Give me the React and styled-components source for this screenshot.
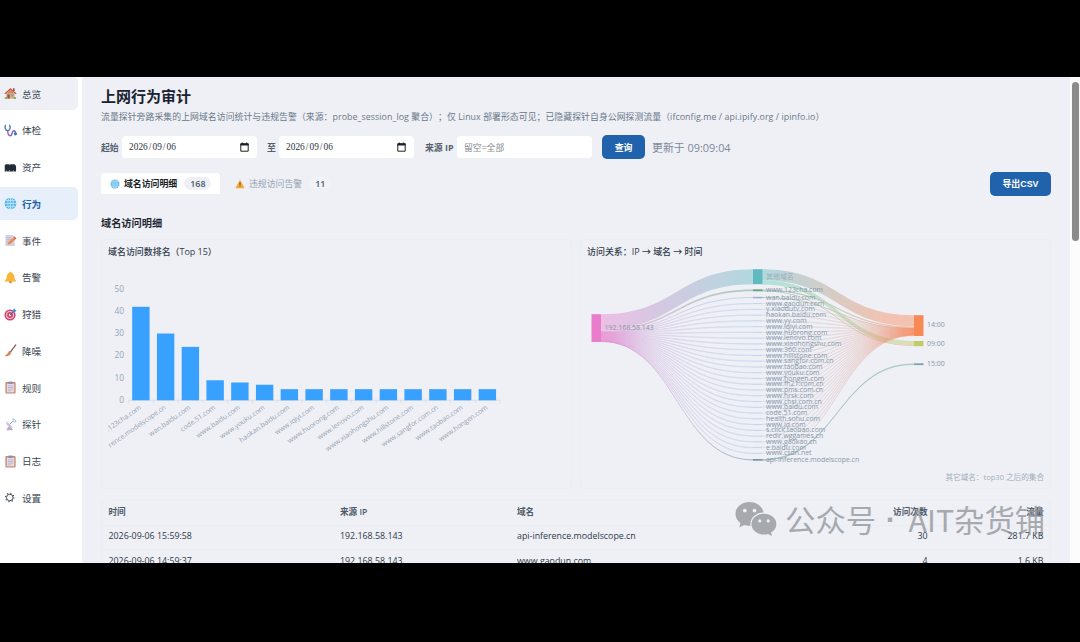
import React from "react";
import styled, { createGlobalStyle, css } from "styled-components";

const font = `"Open Sans", "Noto Sans CJK SC", sans-serif`;

const menu = [
  { name: "总览", icon: "home", hover: true },
  { name: "体检", icon: "stetho" },
  { name: "资产", icon: "asset" },
  { name: "行为", icon: "globe", active: true },
  { name: "事件", icon: "memo" },
  { name: "告警", icon: "bell" },
  { name: "狩猎", icon: "target" },
  { name: "降噪", icon: "broom" },
  { name: "规则", icon: "clip" },
  { name: "探针", icon: "dish" },
  { name: "日志", icon: "clip" },
  { name: "设置", icon: "gear" },
];

const ranking = [
  [".123cha.com", 42],
  ["rence.modelscope.cn", 30],
  ["wan.baidu.com", 24],
  ["code.51.com", 9],
  ["www.baidu.com", 8],
  ["www.youku.com", 7],
  ["haokan.baidu.com", 5],
  ["www.iqiyi.com", 5],
  ["www.huorong.com", 5],
  ["www.lenovo.com", 5],
  ["www.xiaohongshu.com", 5],
  ["www.hillstone.com", 5],
  ["www.sangfor.com.cn", 5],
  ["www.taobao.com", 5],
  ["www.hongen.com", 5],
];

const domains = [
  "www.gaodun.com",
  "y.xiaodutv.com",
  "haokan.baidu.com",
  "www.yy.com",
  "www.iqiyi.com",
  "www.huorong.com",
  "www.lenovo.com",
  "www.xiaohongshu.com",
  "www.360.com",
  "www.hillstone.com",
  "www.sangfor.com.cn",
  "www.taobao.com",
  "www.youku.com",
  "www.hongen.com",
  "www.fh21.com.cn",
  "www.pms.com.cn",
  "www.hrsk.com",
  "www.chsi.com.cn",
  "www.baidu.com",
  "code.51.com",
  "health.sohu.com",
  "www.jd.com",
  "s.click.taobao.com",
  "redir.wggames.cn",
  "www.gaokao.cn",
  "e.baidu.com",
  "www.csdn.net",
];

const rows = [
  ["2026-09-06 15:59:58", "192.168.58.143", "api-inference.modelscope.cn", "30", "281.7 KB"],
  ["2026-09-06 14:59:37", "192.168.58.143", "www.gaodun.com", "4", "1.6 KB"],
];

const icons = {
  home: (
    <>
      <path d="M2.5 6.5h9v6h-9z" fill="#d9a982" />
      <path d="M.4 7 7 1l6.6 6-1 .9L7 3.2 1.4 7.9z" fill="#c8553f" />
      <path d="M3 6.6 7 3l4 3.6z" fill="#d08a63" />
      <path d="M9.7 1.4h1.8v3H9.7z" fill="#a9573d" />
      <path d="M3.7 8h2.4v4.5H3.7z" fill="#8c5a3c" />
      <path d="M7.6 8h2.5v2H7.6z" fill="#6fa6cc" />
      <path d="M.8 11h2.4v1.7H.8zM10.5 11H13v1.7h-2.5z" fill="#6ea35a" />
    </>
  ),
  stetho: (
    <g fill="none" strokeWidth="1.5" strokeLinecap="round">
      <path d="M1.5 1.5C.6 4 1.6 7 4 7.2 6.4 7 7 4 6.2 1.5" stroke="#4d78b5" />
      <path d="M4 7.3C4 10.5 4.6 12.6 6.8 12.6 9.4 12.6 8 7.5 10.5 7.3 12 7.3 12.3 8.2 12.3 9.5" stroke="#8b62b8" />
      <circle cx="12.3" cy="10.6" r="1" fill="#2f83c5" stroke="#2f83c5" />
    </g>
  ),
  asset: (
    <>
      <path d="M.8 4.5 2 3.5h3.5l1 1v6.7H.8z" fill="#222b38" />
      <path d="M6 4.6 7 3.6h4.3L13 5.3v5.9H6z" fill="#222b38" />
      <path d="M2.2 10.2h.7v1h-.7zM5.3 9.8h.6v1.4h-.6zM9.7 10.2h.8v1h-.8z" fill="#fff" />
    </>
  ),
  globe: (
    <>
      <circle cx="7" cy="7" r="6.3" fill="#5db9ea" />
      <g fill="none" stroke="#d3effb" strokeWidth=".7">
        <ellipse cx="7" cy="7" rx="2.9" ry="6.3" />
        <path d="M7 .7v12.6M.7 7h12.6M1.7 3.8h10.6M1.7 10.2h10.6" />
      </g>
    </>
  ),
  memo: (
    <>
      <path d="M1.5 1h8l2 2v10h-10z" fill="#d6cfdf" />
      <path d="M3 4h5M3 6h5M3 8h3M3 10h3" stroke="#b4aec4" strokeWidth=".7" />
      <path d="m4 11.5 1-3 6-5.5 2 2-6.2 5.7z" fill="#e98a54" />
      <path d="m10.3 3.6.9-.9 2.2 2-.9.9z" fill="#d45468" />
    </>
  ),
  bell: (
    <>
      <circle cx="7" cy="11.7" r="1.5" fill="#c17a26" />
      <path d="M7 .8c.8 0 1.1.5 1.1 1.1C10.6 2.5 11 5 11.2 7.2c.1 1.8 2 2.4 2 4.1H.8c0-1.7 1.9-2.3 2-4.1C3 5 3.4 2.5 5.9 1.9 5.9 1.3 6.2.8 7 .8z" fill="#f7b637" />
    </>
  ),
  target: (
    <>
      <circle cx="6.5" cy="7.5" r="6" fill="#d2436c" />
      <circle cx="6.5" cy="7.5" r="4.3" fill="#efc9da" />
      <circle cx="6.5" cy="7.5" r="3.2" fill="#d2436c" />
      <circle cx="6.5" cy="7.5" r="1.3" fill="#f3dfea" />
      <path d="m6.5 7.5 4-4" stroke="#336aa6" strokeWidth="1" />
      <path d="M9.3 4.7V2.4L11.5.4l.4 1.8 1.8.4-2.1 2.1z" fill="#3d93d8" />
    </>
  ),
  broom: (
    <>
      <path d="M12.7 1 7 8.6" stroke="#8f4e43" strokeWidth="1.3" strokeLinecap="round" />
      <path d="M5.6 7.3 8 9.2c-.8 2.4-3 4-5.5 4.3L1 12.3c2-.8 3.500-2.600 4.600-5z" fill="#d9845a" />
    </>
  ),
  clip: (
    <>
      <rect x="1.5" y="1.2" width="11" height="12.3" rx="1" fill="#cb8a70" />
      <path d="M3 2.8h8v9.4H3z" fill="#e4dcec" />
      <path d="M4.7.6h4.6v2.6H4.7z" fill="#8b8fae" />
      <path d="M4.2 5.2h5.6M4.2 7h5.6M4.2 8.8h5.6M4.2 10.5h3.5" stroke="#aaa3c0" strokeWidth=".7" />
    </>
  ),
  dish: (
    <>
      <path d="M2.5 13.3 4.5 9.5H7l3 3.8z" fill="#b9aecb" />
      <path d="M2.3 3.5C2 8 5.5 11 10 10.2z" fill="#cfc5dc" />
      <path d="m6 7 3.4-3.6" stroke="#8e86a8" strokeWidth=".9" />
      <path d="M9 1.2c2.2-.2 3.8 1.3 3.7 3.5M9.2 3c1.1 0 1.8.6 1.8 1.7" stroke="#76a8dc" strokeWidth=".9" fill="none" />
    </>
  ),
  gear: (
    <g fill="none" stroke="#3f4a58">
      <circle cx="6.2" cy="7" r="3.5" strokeWidth="1" />
      <circle cx="6.2" cy="7" r="4.5" strokeWidth="1.2" strokeDasharray="1.300 2.234" />
    </g>
  ),
  warn: (
    <>
      <path d="M7 1.2 13.5 13H.5z" fill="#f3a83b" />
      <path d="M6.3 5h1.4l-.3 4h-.8zM6.4 10h1.2v1.3H6.4z" fill="#4a3b2b" />
    </>
  ),
};

const Icon = ({ name, size = 13 }) => (
  <svg width={size} height={size} viewBox="0 0 14 14">
    {icons[name]}
  </svg>
);

const CalendarIcon = () => (
  <svg width="9" height="10" viewBox="0 0 9 10">
    <path d="M.8 1.8h7.4v7.4H.8z" fill="none" stroke="#1b1f26" strokeWidth="1" />
    <path d="M.5 1.5h8v2h-8zM1.8.5h1V2h-1zM6.2.5h1V2h-1z" fill="#1b1f26" />
  </svg>
);

const DateField = ({ value }) => (
  <Field>
    <DateText>
      {value.split("").map((c, i) => (
        <i key={i}>{c}</i>
      ))}
    </DateText>
    <CalendarIcon />
  </Field>
);

const BarChart = () => {
  const base = 137.3;
  const unit = 2.226;
  const step = 24.75;
  const left = 20.7;
  return (
    <Plot width="400" height="205" viewBox="0 0 400 205">
      {[0, 10, 20, 30, 40, 50].map((v) => (
        <AxisText key={v} x="16" y={base - v * unit + 2.5} textAnchor="end">
          {v}
        </AxisText>
      ))}
      <path d={`M${left} ${base}h${step * 15}v3`} fill="none" stroke="#d5dae3" strokeWidth=".7" />
      {ranking.map(([name, value], i) => {
        const x = left + step * (i + 0.5);
        return (
          <g key={name}>
            <path d={`M${x - step / 2} ${base}v3`} stroke="#d5dae3" strokeWidth=".7" />
            <rect x={x - 8.9} y={base - value * unit} width="17.4" height={value * unit} fill="#38a0ff" />
            <TickText textAnchor="end" transform={`translate(${x + 0.5} ${base + 8.2}) rotate(-35)`}>
              {name}
            </TickText>
          </g>
        );
      })}
    </Plot>
  );
};

// filled ribbon between two columns, same thickness at both ends
const ribbon = (x0, y0, x1, y1, h) => {
  const m = (x0 + x1) / 2;
  return `M${x0} ${y0}C${m} ${y0} ${m} ${y1} ${x1} ${y1}v${h}C${m} ${y1 + h} ${m} ${y0 + h} ${x0} ${y0 + h}z`;
};

const gradients = [
  ["toTeal", "#ea7ccc", "#5fb8c0", 14, 166],
  ["toGreen", "#ea7ccc", "#4f9a72", 14, 166],
  ["toBlue", "#ea7ccc", "#8fb4e0", 14, 150],
  ["toSlate", "#ea7ccc", "#7499a6", 14, 166],
  ["tealOut", "#5fb8c0", "#fc8452", 175, 300],
  ["greenOut", "#5fd0b8", "#bfc85a", 175, 327],
  ["brownOut", "#4f9a72", "#fc8452", 175, 327],
  ["blueOut", "#b5bfe6", "#fc8452", 175, 327],
  ["slateOut", "#7499a6", "#8bb5a8", 175, 327],
];

const Sankey = () => {
  const top = (i) => 40.4 + i * 5.76;
  const thin = 0.36;
  return (
    <Plot width="460" height="205" viewBox="0 0 460 205">
      <defs>
        {gradients.map(([id, a, b, x1, x2]) => (
          <linearGradient key={id} id={id} gradientUnits="userSpaceOnUse" x1={x1} x2={x2} y1="0" y2="0">
            <stop offset="0" stopColor={a} />
            <stop offset="1" stopColor={b} />
          </linearGradient>
        ))}
      </defs>
      <g opacity=".42">
        <path d={ribbon(14, 51.2, 166, 6.2, 15)} fill="url(#toTeal)" />
        <path d={ribbon(14, 66.2, 166, 26.5, 1.7)} fill="url(#toGreen)" />
        <path d={ribbon(14, 67.9, 166, 34, 1)} fill="url(#toBlue)" />
        <path d={ribbon(175, 6.2, 327, 52.2, 11)} fill="url(#tealOut)" />
        <path d={ribbon(175, 17.2, 327, 78, 4.4)} fill="url(#greenOut)" />
        <path d={ribbon(175, 26.5, 327, 63.4, 1.2)} fill="url(#brownOut)" />
        <path d={ribbon(175, 27.7, 327, 82, 0.7)} fill="url(#brownOut)" />
        <path d={ribbon(175, 34, 327, 64.5, 1)} fill="url(#brownOut)" />
      </g>
      {domains.map((d, i) => (
        <React.Fragment key={d}>
          <Thread d={ribbon(14, 68.8 + i * thin, 166, top(i), thin)} fill="url(#toBlue)" stroke="url(#toBlue)" />
          <path d={`M166 ${top(i) + 0.2}h9`} stroke="#c3d5ec" strokeWidth="1.1" />
          <Thread d={ribbon(175, top(i), 327, 65 + i * 0.28, thin)} fill="url(#blueOut)" stroke="url(#blueOut)" />
        </React.Fragment>
      ))}
      <g opacity=".6">
        <path d={ribbon(14, 77.9, 166, 196.3, 1.2)} fill="url(#toSlate)" />
        <path d={ribbon(175, 196.3, 327, 100.6, 1.4)} fill="url(#slateOut)" />
      </g>
      <rect x="4.5" y="51.2" width="9.5" height="27.8" fill="#ea7ccc" />
      <rect x="166" y="6.2" width="9.5" height="15" fill="#60b8c0" />
      <rect x="166" y="26.3" width="9.5" height="2" fill="#6ba585" />
      <rect x="166" y="33.8" width="9.5" height="1.5" fill="#9badc8" />
      <rect x="166" y="196" width="9.5" height="1.7" fill="#7499a6" />
      <rect x="327" y="52.2" width="9.5" height="20.8" fill="#f78a54" />
      <rect x="327" y="78" width="9.5" height="5.2" fill="#c3cb67" />
      <rect x="327" y="100.3" width="9.5" height="1.8" fill="#7fa0ae" />
      <SankeyText x="17.5" y="67.2">192.168.58.143</SankeyText>
      <SankeyText x="179" y="15.8" $faint>其他域名</SankeyText>
      <SankeyText x="179" y="29.3">www.123cha.com</SankeyText>
      <SankeyText x="179" y="36.5">wan.baidu.com</SankeyText>
      {domains.map((d, i) => (
        <SankeyText key={d} x="179" y={top(i) + 2.3}>
          {d}
        </SankeyText>
      ))}
      <SankeyText x="179" y="198.5">api-inference.modelscope.cn</SankeyText>
      <SankeyText x="340" y="64.3">14:00</SankeyText>
      <SankeyText x="340" y="82.8">09:00</SankeyText>
      <SankeyText x="340" y="103.1">15:00</SankeyText>
    </Plot>
  );
};

const App = () => (
  <Page>
    <GlobalStyle />
    <Screen>
      <Sidebar>
        {menu.map((m) => (
          <MenuItem key={m.name} $active={m.active} $hover={m.hover}>
            <Icon name={m.icon} />
            {m.name}
          </MenuItem>
        ))}
      </Sidebar>
      <Main>
        <Title>上网行为审计</Title>
        <Subtitle>
          流量探针旁路采集的上网域名访问统计与违规告警（来源：probe_session_log 聚合）；仅 Linux 部署形态可见；已隐藏探针自身公网探测流量（ifconfig.me / api.ipify.org / ipinfo.io）
        </Subtitle>
        <Filters>
          <Label $width={21}>起始</Label>
          <DateField value="2026/09/06" />
          <Label $width={12} $gap={10}>至</Label>
          <DateField value="2026/09/06" />
          <Label $width={32} $gap={11}>来源 IP</Label>
          <Field>
            <Placeholder>留空=全部</Placeholder>
          </Field>
          <Button $width={43} $gap={10}>查询</Button>
          <Updated>更新于 09:09:04</Updated>
        </Filters>
        <Tabs>
          <Tab $active>
            <Icon name="globe" size={10} />
            域名访问明细
            <Badge $active>168</Badge>
          </Tab>
          <Tab>
            <Icon name="warn" size={10} />
            违规访问告警
            <Badge>11</Badge>
          </Tab>
          <Spacer />
          <Button $width={61}>导出CSV</Button>
        </Tabs>
        <Heading>域名访问明细</Heading>
        <Charts>
          <Card>
            <CardTitle>域名访问数排名（Top 15）</CardTitle>
            <BarChart />
          </Card>
          <Card>
            <CardTitle>访问关系：IP → 域名 → 时间</CardTitle>
            <Sankey />
            <Note>其它域名：top30 之后的集合</Note>
          </Card>
        </Charts>
        <Table>
          <Row $head>
            <span>时间</span>
            <span>来源 IP</span>
            <span>域名</span>
            <span>访问次数</span>
            <span>流量</span>
          </Row>
          {rows.map((r) => (
            <Row key={r[0]}>
              {r.map((c) => (
                <span key={c}>{c}</span>
              ))}
            </Row>
          ))}
        </Table>
      </Main>
      <Scrollbar>
        <Thumb />
      </Scrollbar>
      <Watermark>
        <svg width="42" height="36" viewBox="0 0 42 36">
          <path d="M14.5 1C6.5 1 .5 6.3.5 13c0 3.7 2 7 5 9.2L4.2 26.5l5-2.6c1.7.5 3.5.8 5.3.8h1.2c-1.500-7.200 4.800-13.300 12.800-13.300C27.300 5.300 21.500 1 14.500 1z" />
          <path d="M29 12.800c-7 0-12.500 4.700-12.500 10.400S22 33.600 29 33.600c1.400 0 2.800-.2 4.100-.6l3.900 2.100-1-3.500c3.300-1.900 5.400-5 5.400-8.400 0-5.700-5.400-10.400-12.400-10.400z" />
          <g fill="#eef0f6">
            <circle cx="9.8" cy="9.6" r="1.9" />
            <circle cx="19.5" cy="9.6" r="1.9" />
            <circle cx="24.8" cy="19.9" r="1.6" />
            <circle cx="33.2" cy="19.9" r="1.6" />
          </g>
        </svg>
        <MarkText $width={92}>公众号</MarkText>
        <MarkText $width={31.5} $dot>·</MarkText>
        <MarkText>AIT杂货铺</MarkText>
      </Watermark>
    </Screen>
  </Page>
);

const GlobalStyle = createGlobalStyle`
  * {
    box-sizing: border-box;
  }
  body {
    margin: 0;
    background: #000;
    font-family: ${font};
    text-spacing-trim: space-all;
    overflow: hidden;
  }
  svg {
    display: block;
    flex: none;
  }
`;

const Page = styled.div`
  height: 642px;
  padding: 77px 0 79px;
  background: #000;
`;

const Screen = styled.div`
  position: relative;
  display: flex;
  width: 1080px;
  height: 486px;
  overflow: hidden;
  background: #eef0f6;
`;

const Sidebar = styled.nav`
  display: flex;
  flex-direction: column;
  gap: 3.75px;
  flex: none;
  width: 82px;
  background: #fff;
`;

const MenuItem = styled.div`
  display: flex;
  align-items: center;
  flex: none;
  gap: 5.5px;
  width: 77.5px;
  height: 33px;
  padding-left: 3.5px;
  border-radius: 0 5px 5px 0;
  font-size: 9.6px;
  color: #3c4654;
  ${(p) => p.$hover && css`background: #eef0f6;`}
  ${(p) => p.$active && css`
    background: #e6effa;
    color: #1f5fa8;
    font-weight: 700;
  `}
`;

const Main = styled.main`
  display: flex;
  flex-direction: column;
  flex: none;
  width: 988px;
  height: 486px;
  padding: 9px 19px 0;
  overflow: hidden;
`;

const Title = styled.h1`
  flex: none;
  margin: 0;
  height: 20px;
  line-height: 20px;
  font-size: 15px;
  font-weight: 700;
  color: #1a2230;
`;

const Subtitle = styled.p`
  flex: none;
  margin: 4px 0 0;
  height: 14px;
  line-height: 14px;
  font-size: 8.86px;
  letter-spacing: 0.06px;
  color: #6b7888;
  white-space: nowrap;
`;

const Filters = styled.div`
  display: flex;
  align-items: center;
  flex: none;
  height: 24px;
  margin-top: 11px;
`;

const Label = styled.span`
  width: ${(p) => p.$width}px;
  margin-left: ${(p) => p.$gap || 0}px;
  font-size: 8.9px;
  font-weight: 700;
  color: #56616f;
  white-space: nowrap;
`;

const Field = styled.div`
  display: flex;
  align-items: center;
  justify-content: space-between;
  width: 135px;
  height: 21.5px;
  padding: 0 8px 0 7px;
  border-radius: 4px;
  background: #fff;
`;

const DateText = styled.span`
  display: flex;
  font-family: "Liberation Serif", serif;
  font-size: 9.3px;
  color: #2b323c;
  i {
    width: 4.7px;
    text-align: center;
    font-style: normal;
  }
`;

const Placeholder = styled.span`
  font-size: 8.8px;
  color: #83878d;
`;

const Button = styled.button`
  width: ${(p) => p.$width}px;
  height: 24px;
  margin: 0 0 0 ${(p) => p.$gap || 0}px;
  padding: 0;
  border: 0;
  border-radius: 5px;
  background: #2062ab;
  color: #fff;
  font-family: "Liberation Sans", "Noto Sans CJK SC", sans-serif;
  font-size: 8.9px;
  font-weight: 700;
`;

const Updated = styled.span`
  margin-left: 7px;
  font-size: 10.9px;
  color: #7d8897;
`;

const Tabs = styled.div`
  display: flex;
  align-items: center;
  flex: none;
  height: 25px;
  margin-top: 12px;
`;

const Tab = styled.div`
  display: flex;
  align-items: center;
  gap: 4px;
  height: 20.5px;
  padding: 0 8.5px 0 9px;
  margin-right: 6px;
  border-radius: 4px 4px 0 0;
  font-size: 8.9px;
  color: #98a4b3;
  ${(p) => p.$active && css`
    background: #fff;
    color: #171d27;
    font-weight: 700;
  `}
`;

const Badge = styled.span`
  display: flex;
  align-items: center;
  justify-content: center;
  min-width: 22px;
  height: 13.5px;
  padding: 0 6px;
  margin-left: 3px;
  border-radius: 7px;
  background: ${(p) => (p.$active ? "#eef0f6" : "#f0f2f7")};
  font-size: 8.9px;
  font-weight: 600;
  color: #4a5666;
`;

const Spacer = styled.div`
  flex: 1;
`;

const Heading = styled.h2`
  flex: none;
  margin: 18px 0 0;
  height: 18px;
  line-height: 18px;
  font-size: 10.2px;
  font-weight: 700;
  color: #1f2733;
`;

const Charts = styled.div`
  display: grid;
  grid-template-columns: 471px 471px;
  gap: 8px;
  flex: none;
  height: 250px;
  margin-top: 7px;
`;

const Card = styled.section`
  display: flex;
  flex-direction: column;
  padding: 4px 6px 0;
  border: 1px solid #ebedf3;
  border-radius: 4px;
`;

const CardTitle = styled.h3`
  flex: none;
  margin: 0;
  height: 15px;
  line-height: 15px;
  font-size: 8.95px;
  font-weight: 500;
  color: #303a48;
`;

const Plot = styled.svg`
  margin-top: 4px;
`;

const AxisText = styled.text`
  font-family: ${font};
  font-size: 8.4px;
  fill: #98a6b5;
`;

const TickText = styled.text`
  font-family: ${font};
  font-size: 6.9px;
  fill: #98a2ae;
`;

const Thread = styled.path`
  stroke-width: 0.8px;
  opacity: 0.3;
`;

const SankeyText = styled.text`
  font-family: ${font};
  font-size: 6.95px;
  fill: #8797a6;
  opacity: ${(p) => (p.$faint ? 0.6 : 1)};
`;

const Note = styled.p`
  margin: 3px 0 0;
  line-height: 12px;
  font-size: 7.6px;
  text-align: right;
  color: #a3afbc;
`;

const Table = styled.div`
  flex: none;
  margin-top: 11px;
  border: 1px solid #ebedf3;
  border-radius: 4px;
`;

const Row = styled.div`
  display: grid;
  grid-template-columns: 231.5px 177px 320px 90.5px 116px;
  align-items: center;
  height: 24.5px;
  padding: 0 0 2px 6.5px;
  border-bottom: 1px solid #ebedf3;
  font-size: 8.85px;
  color: #2f3947;
  span:nth-child(n + 4) {
    text-align: right;
  }
  ${(p) => p.$head && css`
    padding-bottom: 3px;
    font-size: 8.6px;
    font-weight: 600;
    color: #4e5a69;
  `}
`;

const Scrollbar = styled.div`
  flex: none;
  width: 10px;
  padding: 5px 1px 0 2px;
  background: #fcfcfc;
`;

const Thumb = styled.div`
  height: 158.5px;
  border-radius: 4px;
  background: #8b8b8b;
`;

const Watermark = styled.div`
  position: absolute;
  left: 735px;
  top: 423px;
  display: flex;
  align-items: center;
  height: 38px;
  color: #8e9296;
  fill: #8e9296;
  opacity: 0.75;
  white-space: nowrap;
  svg {
    margin-right: 8px;
  }
`;

const MarkText = styled.span`
  width: ${(p) => (p.$width ? p.$width + "px" : "auto")};
  padding-right: ${(p) => (p.$dot ? 4 : 0)}px;
  font-family: ${(p) => (p.$dot ? `"Liberation Sans"` : `"Noto Sans CJK SC"`)}, sans-serif;
  font-size: 30.4px;
  font-weight: ${(p) => (p.$dot ? 700 : 400)};
  line-height: 34px;
  text-align: ${(p) => (p.$dot ? "center" : "left")};
`;

export default App;
